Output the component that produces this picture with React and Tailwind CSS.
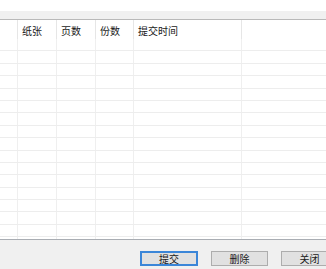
import React from "react";

const COLS = "grid grid-cols-[18px_39px_39px_38px_108px_1fr]";
const HEAD = ["", "纸张", "页数", "份数", "提交时间", ""];
const ROWS = Array.from({ length: 17 });

export default function App() {
  return (
    <div
      className="w-[326px] h-[269px] flex flex-col bg-white overflow-hidden text-[10px] text-[#1a1a1a]"
      style={{ fontFamily: '"Noto Sans CJK SC", "Noto Sans", sans-serif' }}
    >
      <div className="h-[11px] bg-white" />
      <div className="h-[9px] bg-[#f0f0f0] border-b border-[#b9b9b9]" />

      {/* 表头 */}
      <div className={`${COLS} h-[19px]`}>
        {HEAD.map((h, i) => (
          <div
            key={i}
            className={`flex items-center pl-[4px] pt-[2px] leading-none ${i < 5 ? "border-r border-[#e6e6e6]" : ""}`}
          >
            {h}
          </div>
        ))}
      </div>

      {/* 列表 */}
      <div className="h-[201px] overflow-hidden border-b border-[#a9adb3]">
        {ROWS.map((_, r) => (
          <div key={r} className={`${COLS} h-[12.4px] border-b border-[#ededed]`}>
            {HEAD.map((_, i) => (
              <div key={i} className={i < 5 ? "border-r border-[#efefef]" : ""} />
            ))}
          </div>
        ))}
      </div>

      {/* 按钮栏 */}
      <div className="flex-1 bg-[#f0f0f0] flex items-start pt-[11px] pl-[140px] gap-[13px]">
        <button className="w-[58px] h-[15px] shrink-0 flex items-center justify-center bg-[#e1e1e1] border-2 border-[#3b86d8] text-[10px] leading-none">
          提交
        </button>
        <button className="w-[57px] h-[15px] shrink-0 flex items-center justify-center bg-[#e1e1e1] border border-[#adadad] text-[10px] leading-none">
          删除
        </button>
        <button className="w-[57px] h-[15px] shrink-0 flex items-center justify-center bg-[#e1e1e1] border border-[#adadad] text-[10px] leading-none">
          关闭
        </button>
      </div>
    </div>
  );
}
